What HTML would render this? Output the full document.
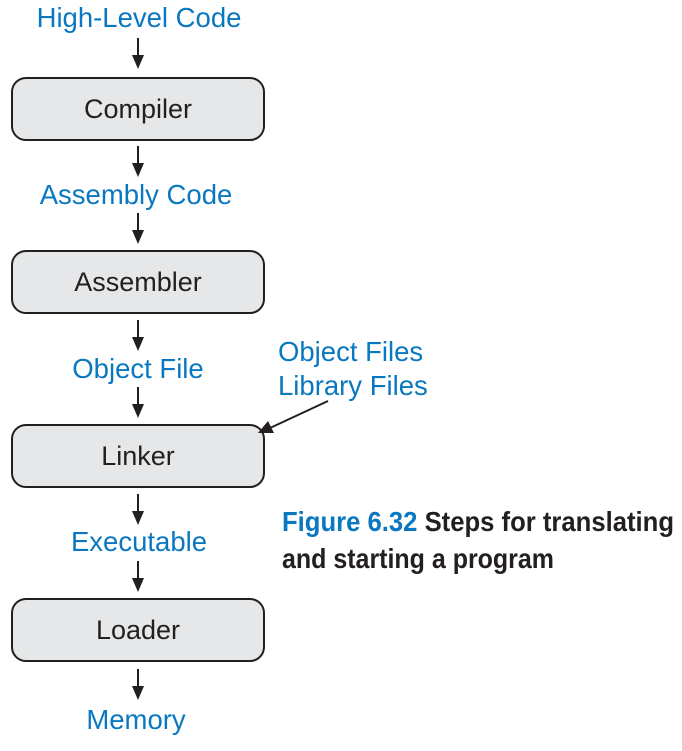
<!DOCTYPE html>
<html><head><meta charset="utf-8"><style>
html,body{margin:0;padding:0;background:#fff;width:682px;height:751px;overflow:hidden}
</style></head><body>
<svg width="682" height="751" viewBox="0 0 682 751" xmlns="http://www.w3.org/2000/svg">
<defs>
<g id="ar"><line x1="0" y1="0" x2="0" y2="22" stroke="#231f20" stroke-width="2"/><path d="M-6 17 L6 17 L0 31 Z" fill="#231f20"/></g>
</defs>
<g font-family="Liberation Sans, Arial, sans-serif" font-size="27.5" text-anchor="middle">
<text x="139" y="27" fill="#0a78c0">High-Level Code</text>
<text x="136" y="204" fill="#0a78c0">Assembly Code</text>
<text x="138" y="378" fill="#0a78c0">Object File</text>
<text x="139" y="551" fill="#0a78c0">Executable</text>
<text x="136" y="729" fill="#0a78c0">Memory</text>
<text x="278" y="361" text-anchor="start" fill="#0a78c0">Object Files</text>
<text x="278" y="395" text-anchor="start" fill="#0a78c0">Library Files</text>
<g fill="#e6e7e8" stroke="#231f20" stroke-width="2">
<rect x="12" y="78" width="252" height="62" rx="14"/>
<rect x="12" y="251" width="252" height="62" rx="14"/>
<rect x="12" y="425" width="252" height="62" rx="14"/>
<rect x="12" y="599" width="252" height="62" rx="14"/>
</g>
<g fill="#231f20" font-size="27">
<text x="138" y="118">Compiler</text>
<text x="138" y="291">Assembler</text>
<text x="138" y="465">Linker</text>
<text x="138" y="639">Loader</text>
</g>
</g>
<use href="#ar" x="138" y="38"/>
<use href="#ar" x="138" y="146"/>
<use href="#ar" x="138" y="213"/>
<use href="#ar" x="138" y="320"/>
<use href="#ar" x="138" y="387"/>
<use href="#ar" x="138" y="494"/>
<use href="#ar" x="138" y="561"/>
<use href="#ar" x="138" y="669"/>
<line x1="328" y1="401" x2="270" y2="428" stroke="#231f20" stroke-width="2"/>
<path d="M258 433 L268 421 L274 433 Z" fill="#231f20"/>
<g font-family="Liberation Sans Narrow, Liberation Sans, Arial, sans-serif" font-weight="bold" font-size="28">
<text x="282" y="531" textLength="392" lengthAdjust="spacingAndGlyphs"><tspan fill="#0a78c0">Figure 6.32</tspan><tspan fill="#231f20">  Steps for translating</tspan></text>
<text x="282" y="568" textLength="272" lengthAdjust="spacingAndGlyphs" fill="#231f20">and starting a program</text>
</g>
</svg>
</body></html>
